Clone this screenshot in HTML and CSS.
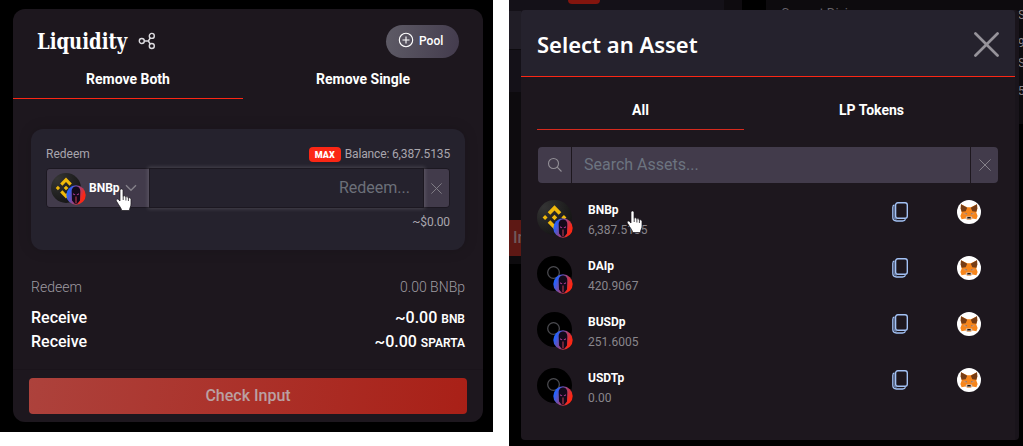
FILE: index.html
```html
<!DOCTYPE html>
<html lang="en">
<head>
<meta charset="utf-8">
<title>Liquidity</title>
<link rel="stylesheet" href="styles.css">
</head>
<body>
<svg class="defs" width="0" height="0">
  <defs>
    <linearGradient id="sparta-bg" x1="0" y1=".3" x2="1" y2=".7">
      <stop offset=".1" stop-color="#2463ff"/><stop offset=".85" stop-color="#fb2715"/>
    </linearGradient>
    <radialGradient id="bnb-bg" cx=".2" cy=".2" r=".9">
      <stop offset="0" stop-color="#343434"/><stop offset="1" stop-color="#151515"/>
    </radialGradient>
    <symbol id="sparta" viewBox="0 0 20 20">
      <circle cx="10" cy="10" r="9.700" fill="url(#sparta-bg)"/>
      <path d="M10 1.400C7 1.400 5.700 3.600 5.700 6.500L6 15.500l2.700 3.300h2.600l2.700-3.300.3-9c0-2.900-1.300-5.100-4.300-5.100z" fill="#12091a"/>
      <path d="M10 11.500v6.500" stroke="#b8394f" stroke-width="1.100"/>
      <path d="M7 8.300l2.300 1.100-.3.900L7 9.400zM13 8.300l-2.300 1.100.3.900 2-.9z" fill="#a83a90"/>
    </symbol>
    <symbol id="bnb" viewBox="0 0 36 36">
      <circle cx="18" cy="18" r="18" fill="url(#bnb-bg)"/>
      <g fill="#f0b90b">
        <path d="M18 5.500l7 7-2.700 2.700-4.300-4.300-4.300 4.300-2.700-2.700z"/>
        <path d="M18 30.500l7-7-2.700-2.700-4.300 4.300-4.300-4.300-2.700 2.700z"/>
        <path d="M18 15.200l2.800 2.800-2.800 2.800-2.800-2.800zM8.300 15.400l2.600 2.600-2.600 2.600L5.700 18zM27.700 15.400l2.600 2.600-2.600 2.600-2.600-2.600z"/>
      </g>
    </symbol>
    <symbol id="unknown" viewBox="0 0 36 36">
      <circle cx="18" cy="18" r="18" fill="#000"/>
      <circle cx="17" cy="17" r="6" fill="none" stroke="#4b4b50" stroke-width="1.300"/>
      <path d="M21.500 21.500l5 5" stroke="#4b4b50" stroke-width="1.300"/>
    </symbol>
    <symbol id="copy" viewBox="0 0 16 20">
      <path d="M2.500 3C1 3.400.8 4.300.8 5.500v9.800c0 2.400 1.300 3.700 3.700 3.700h6c1.500 0 2.500-.3 3-1.700" fill="none" stroke="#a3c2f5" stroke-width="1.300"/>
      <path d="M2.100 4v10.500c0 1.700.8 2.700 2.500 2.700" fill="none" stroke="#62749a" stroke-width="1.400"/>
      <rect x="3.600" y=".8" width="11.700" height="15.500" rx="2.200" fill="#1d171e" stroke="#a3c2f5" stroke-width="1.400"/>
    </symbol>
    <symbol id="fox" viewBox="0 0 24 24">
      <circle cx="12" cy="12" r="12" fill="#fff"/>
      <path d="M4 4.200l6.200 3h3.600l6.200-3 .3 4.600-1 3.700 1.300 3.600-1.200 3.200-3.800-.8-2 1.300h-3.200l-2-1.300-3.800.8-1.200-3.200 1.300-3.600-1-3.700z" fill="#f6851b"/>
      <path d="M4 4.200l6.200 3.500-1.500 3.600-4 .4L3.700 8.800zM20 4.200l-6.200 3.500 1.500 3.600 4 .4 1-2.900z" fill="#763d16"/>
      <path d="M6.500 12.800l3.300.2.500 2-3.800-.8zM17.500 12.800l-3.300.2-.5 2 3.800-.8z" fill="#d9915b"/>
      <path d="M8 13.200l1.800.2.300 1.200zM16 13.200l-1.800.2-.3 1.200z" fill="#5f6672"/>
      <path d="M9 16.500h6l.5 2-2 1h-3l-2-1z" fill="#d7c1b3"/>
      <path d="M10.500 17h3l.4 1.500h-3.800z" fill="#161616"/>
    </symbol>
    <symbol id="cross" viewBox="0 0 12 12">
      <path d="M.7.700l10.600 10.600M11.300.700L.7 11.300" fill="none" stroke="currentColor" stroke-linecap="round"/>
    </symbol>
    <symbol id="hand" viewBox="0 0 18 24">
      <path d="M5 2.500C5 .4 8 .4 8 2.500v5.700c.7-.8 2.500-.5 2.700.7.900-.6 2.300-.2 2.500 1 1-.5 2.800 0 2.800 1.600v4.500c0 2.500-1.300 3.500-1.600 6.500H6.700c-.5-2.500-2-4-3.300-6.200l-2-3.200c-.9-1.500.8-2.600 2-1.600L5 13z" fill="#fff" stroke="#17131a" stroke-width=".7"/>
      <path d="M8.200 8v4M10.900 9v3.500M13.400 10v3" stroke="#17131a" stroke-width=".8"/>
    </symbol>
  </defs>
</svg>

<section class="pool-shot">
  <div class="card">
    <header class="card-head">
      <h1 class="card-title"><span>Liquidity</span></h1>
      <svg class="share" viewBox="0 0 18 18" fill="none" stroke="#dddce0" stroke-width="1.400">
        <circle cx="3.800" cy="9" r="2.500"/><circle cx="13.800" cy="3.900" r="2.500"/><circle cx="13.800" cy="14" r="2.500"/>
        <path d="M6.300 9h4l2-3M10.300 9l2 3"/>
      </svg>
      <button class="pool-btn">
        <svg viewBox="0 0 16 16" fill="none" stroke="#fff" stroke-width="1.100"><circle cx="8" cy="8" r="6.700"/><path d="M8 4.500v7M4.500 8h7"/></svg>
        <span>Pool</span>
      </button>
    </header>
    <nav class="tabs"><span class="tab active">Remove Both</span><span class="tab">Remove Single</span></nav>
    <div class="panel">
      <div class="panel-top">
        <span>Redeem</span>
        <span class="balance"><b class="max">MAX</b><span class="balance-text">Balance: 6,387.5135</span></span>
      </div>
      <div class="redeem-field">
        <div class="asset-pick">
          <span class="coin small"><svg class="base"><use href="#bnb"/></svg><svg class="badge"><use href="#sparta"/></svg></span>
          <b>BNBp</b>
          <svg class="chevron" viewBox="0 0 12 8"><path d="M1 1.200l5 5 5-5" fill="none" stroke="#85828a" stroke-width="1.400"/></svg>
        </div>
        <div class="amount">Redeem...</div>
        <div class="clear"><svg><use href="#cross"/></svg></div>
      </div>
      <div class="usd">~$0.00</div>
    </div>
    <div class="summary">
      <div class="line muted"><span>Redeem</span><span>0.00 BNBp</span></div>
      <div class="line first"><span>Receive</span><span>~0.00 <small>BNB</small></span></div>
      <div class="line"><span>Receive</span><span>~0.00 <small>SPARTA</small></span></div>
    </div>
    <footer class="card-foot"><button class="check">Check Input</button></footer>
  </div>
  <svg class="cursor cursor-left"><use href="#hand"/></svg>
</section>

<section class="modal-shot">
  <div class="behind top-left"></div>
  <div class="behind top-mid"></div>
  <div class="behind top-right"></div>
  <div class="behind side-row"></div>
  <div class="behind side-field"></div>
  <div class="behind side-low"></div>
  <div class="behind side-foot"></div>
  <div class="behind side-btn">In</div>
  <div class="behind red-chip"></div>
  <div class="behind tops">Current Divi</div>
  <div class="behind right-text"><span>S</span><span>9</span><span>S</span><span>5</span></div>
  <div class="modal">
    <header class="modal-head"><h2>Select an Asset</h2><svg class="close"><use href="#cross"/></svg></header>
    <nav class="modal-tabs"><span class="mtab active">All</span><span class="mtab">LP Tokens</span></nav>
    <div class="search">
      <span class="search-icon"><svg viewBox="0 0 16 16" fill="none" stroke="#928f96" stroke-width="1.100"><circle cx="6.500" cy="6.500" r="5"/><path d="M10.200 10.200l4.300 4.300"/></svg></span>
      <span class="search-input">Search Assets...</span>
      <span class="search-clear"><svg><use href="#cross"/></svg></span>
    </div>
    <ul class="assets">
      <li><span class="coin"><svg class="base"><use href="#bnb"/></svg><svg class="badge"><use href="#sparta"/></svg></span><div class="info"><b>BNBp</b><span>6,387.5135</span></div><svg class="copy"><use href="#copy"/></svg><svg class="fox"><use href="#fox"/></svg></li>
      <li><span class="coin"><svg class="base"><use href="#unknown"/></svg><svg class="badge"><use href="#sparta"/></svg></span><div class="info"><b>DAIp</b><span>420.9067</span></div><svg class="copy"><use href="#copy"/></svg><svg class="fox"><use href="#fox"/></svg></li>
      <li><span class="coin"><svg class="base"><use href="#unknown"/></svg><svg class="badge"><use href="#sparta"/></svg></span><div class="info"><b>BUSDp</b><span>251.6005</span></div><svg class="copy"><use href="#copy"/></svg><svg class="fox"><use href="#fox"/></svg></li>
      <li><span class="coin"><svg class="base"><use href="#unknown"/></svg><svg class="badge"><use href="#sparta"/></svg></span><div class="info"><b>USDTp</b><span>0.00</span></div><svg class="copy"><use href="#copy"/></svg><svg class="fox"><use href="#fox"/></svg></li>
    </ul>
  </div>
  <svg class="cursor cursor-right"><use href="#hand"/></svg>
</section>
</body>
</html>
```
FILE: styles.css
```css
* { box-sizing: border-box; }
body {
  margin: 0;
  width: 1023px;
  height: 446px;
  overflow: hidden;
  display: flex;
  align-items: flex-start;
  gap: 16px;
  background: #fff;
  color: #fff;
  font-family: Roboto, "Liberation Sans", sans-serif;
}
svg { display: block; flex: none; }
.defs { position: absolute; }
button { border: 0; font-family: inherit; }

.pool-shot { position: relative; width: 493px; height: 432px; padding: 9px 10px 10px 13px; background: #000; }
.card { height: 413px; display: flex; flex-direction: column; background: #1d171e; border-radius: 12px; }
.card-head { height: 53px; display: flex; align-items: center; padding: 11px 24px 0; }
.card-title { margin: 0; width: 101px; font: bold 22.500px/28px "DejaVu Serif Condensed", "DejaVu Serif", serif; font-stretch: condensed; }
.card-title span { display: inline-block; transform: scaleX(.89); transform-origin: left; }
.share { width: 18px; height: 18px; }
.pool-btn {
  margin-left: auto; width: 73px; height: 33px; padding: 0 0 2px 12px;
  display: flex; align-items: center; gap: 5px;
  border-radius: 17px; color: #fff; font-size: 12px; font-weight: 500;
  background: linear-gradient(100deg, #5e5b66, #433b4d);
}
.pool-btn svg { width: 16px; height: 16px; }
.pool-btn span { padding-top: 1px; }
.tabs { display: grid; grid-template-columns: 230px 240px; height: 38px; }
.tab { height: 38px; padding-top: 8px; text-align: center; font-size: 14px; line-height: 18px; font-weight: 700; }
.tab.active { height: 37px; border-bottom: 1px solid #fb2715; }

.panel {
  margin: 29px 18px 0; height: 121px; padding: 16px 15px 0;
  background: #25222d; border-radius: 12px; box-shadow: 0 0 14px rgba(0,0,0,.15);
}
.panel-top { height: 18px; display: flex; justify-content: space-between; align-items: center; font-size: 12px; color: #a9a6ad; }
.balance { display: flex; align-items: center; gap: 4px; }
.balance-text { letter-spacing: -.15px; }
.max { width: 32px; height: 15px; border-radius: 4px; background: #fb2715; color: #fff; font-size: 9px; line-height: 16px; text-align: center; font-weight: 900; }
.redeem-field { display: flex; margin-top: 5px; height: 40px; border: 1px solid #1c1821; border-radius: 4px; }
.asset-pick { width: 102px; padding-left: 4px; display: flex; align-items: center; background: #423b4b; border-radius: 3px 0 0 3px; }
.asset-pick b { margin-left: 8px; font-size: 12px; line-height: 16px; }
.chevron { width: 12px; height: 8px; margin-left: 5px; }
.coin { position: relative; width: 35px; height: 35px; flex: none; }
.coin .base { width: 35px; height: 35px; }
.coin .badge { position: absolute; left: 16px; top: 18px; width: 20px; height: 20px; }
.coin.small { width: 30px; height: 30px; }
.coin.small .base { width: 30px; height: 30px; }
.coin.small .badge { left: 15px; top: 12px; }
.amount {
  flex: 1; margin: -1px 0; padding-right: 13px; border: 1px solid #1c1821; background: #25222d;
  box-shadow: 0 0 4px 1px rgba(255,255,255,.16); position: relative;
  font-size: 16px; line-height: 38px; text-align: right; font-weight: 400;
  color: #6c7079;
}
.clear { width: 25px; display: grid; place-items: center; background: #423b4b; border-radius: 0 3px 3px 0; color: #85828a; }
.clear svg { width: 11px; height: 11px; }
.usd { margin-top: 5px; text-align: right; font-size: 12px; line-height: 18px; color: #a9a6ad; letter-spacing: -.1px; }
.summary { padding: 26px 18px 0; height: 119px; font-weight: 500; font-size: 16px; }
.line { display: flex; justify-content: space-between; height: 24px; line-height: 24px; }
.line small { font-size: 12px; font-weight: 600; }
.line.muted { height: 23px; line-height: 23px; color: #9d9aa1; font-size: 14px; font-weight: 300; }
.line.first { margin-top: 7px; }
.card-foot { border-top: 1px solid #1a141b; padding: 8px 16px 0; }
.check {
  display: block; width: 438px; height: 36px; padding: 0 0 2px; border-radius: 4px;
  background: linear-gradient(100deg, #ad423c, #a92017); color: #baa0a2; font-size: 16px; font-weight: 500;
}

.modal-shot { position: relative; width: 514px; height: 446px; padding: 10px 4px 6px 12px; background: #000; overflow: hidden; }
.behind { position: absolute; }
.top-left { left: 0; top: 0; width: 215px; height: 92px; background: #141118; }
.top-mid { left: 215px; top: 0; width: 18px; height: 12px; background: #0e0b0f; }
.top-right { left: 257px; top: 0; width: 257px; height: 124px; background: #0d0b0e; }
.side-row { left: 0; top: 11px; width: 12px; height: 39px; background: #201d26; border-bottom: 1px solid #0d0b0f; }
.side-field { left: 0; top: 50px; width: 12px; height: 42px; background: #141118; }
.side-low { left: 0; top: 92px; width: 12px; height: 128px; background: #0d0b0e; }
.side-foot { left: 0; top: 256px; width: 12px; height: 8px; background: #0d0b0e; }
.side-btn { left: 0; top: 220px; width: 20px; height: 36px; padding-left: 4px; background: #5d1814; color: #70595a; font-size: 16px; line-height: 35px; font-weight: 500; }
.red-chip { left: 59px; top: 0; width: 32px; height: 4px; border-radius: 0 0 4px 4px; background: #83150e; }
.tops { left: 272px; top: 4px; color: #656269; font-size: 13px; line-height: 18px; }
.right-text { left: 509px; top: 5px; width: 9px; display: flex; flex-direction: column; color: #88838a; font-size: 12px; line-height: 20px; }
.right-text span { height: 24px; }
.right-text span:nth-child(2) { padding-top: 4px; }
.right-text span:nth-child(4) { padding-top: 4px; }
.modal { position: relative; width: 498px; height: 430px; background: #1d171e; border-right: 4px solid #19141b; border-radius: 4px; }
.modal-head { height: 67px; padding: 2px 16px 0; display: flex; align-items: center; justify-content: space-between; background: #25222d; border-bottom: 1px solid #fb2715; border-radius: 4px 4px 0 0; }
.modal-head h2 { margin: 0; font: 600 22px/30px "Noto Sans", "Open Sans", sans-serif; }
.close { width: 25px; height: 25px; color: #96939a; stroke-width: 1.300; }
.modal-tabs { display: grid; grid-template-columns: 207px 1fr; padding: 0 16px; height: 70px; }
.mtab { padding-top: 24px; height: 53px; text-align: center; font-size: 14px; line-height: 19px; font-weight: 700; }
.mtab.active { border-bottom: 1px solid #d72a1d; }
.search { display: flex; gap: 1px; height: 36px; margin: 0 17px; color: #85828a; }
.search > span { background: #423b4b; display: flex; align-items: center; justify-content: center; }
.search .search-icon { width: 33px; border-radius: 4px 0 0 4px; }
.search-icon svg { width: 16px; height: 16px; }
.search .search-input { flex: 1; justify-content: flex-start; padding: 0 0 2px 12px; font-size: 16px; color: #6c7480; }
.search .search-clear { width: 27px; border-radius: 0 4px 4px 0; }
.search-clear svg { width: 12px; height: 12px; }
.assets { list-style: none; margin: 0; padding: 17px 16px 0; }
.assets li { height: 56px; display: flex; align-items: flex-start; }
.info { width: 304px; margin-left: 16px; display: flex; flex-direction: column; font-size: 12px; line-height: 20px; color: #89868c; }
.info b { color: #fff; }
.copy { width: 16px; height: 20px; margin-top: 2px; }
.fox { width: 24px; height: 24px; margin-left: 49px; }
.cursor { position: absolute; width: 18px; height: 24px; }
.cursor-left { left: 115px; top: 188px; }
.cursor-right { left: 117px; top: 210px; }
```
